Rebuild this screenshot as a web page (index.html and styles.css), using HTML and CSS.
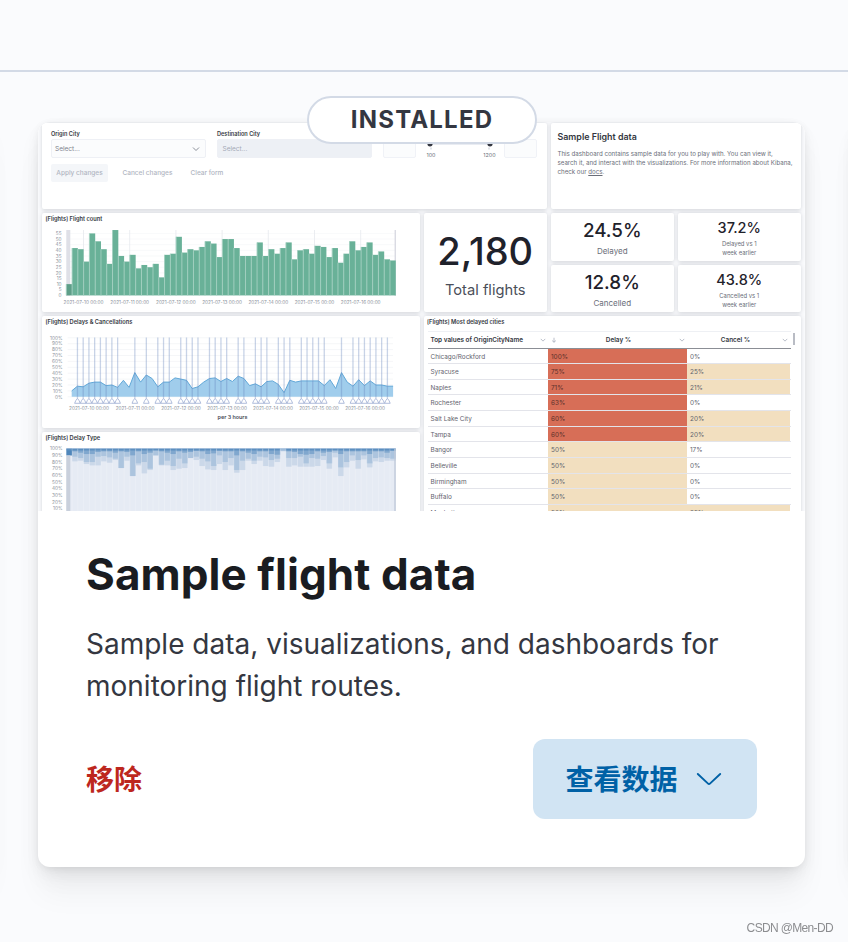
FILE: index.html
```html
<!DOCTYPE html>
<html lang="zh-CN">
<head>
    <meta charset="UTF-8">
    <meta name="viewport" content="width=device-width, initial-scale=1.0">
    <title>Sample data</title>
    <link rel="stylesheet" href="styles.css">
</head>
<body>

<div class="page-header"></div>

<div class="card-row">
    <div class="card"></div>

    <div class="card">
        <span class="badge">INSTALLED</span>

        <div class="preview">
            <div class="panel controls">
                <div class="fields">
                    <div class="field">
                        <div class="field-label">Origin City</div>
                        <div class="select">Select...
                            <svg class="chevron" viewBox="0 0 8 8"><path d="M1 2.5 4 5.5 7 2.5"/></svg>
                        </div>
                    </div>
                    <div class="field">
                        <div class="field-label">Destination City</div>
                        <div class="select disabled">Select...</div>
                    </div>
                    <div class="range">
                        <div class="range-input"></div>
                        <svg class="range-track" width="88" height="20" viewBox="0 0 88 20">
                            <path d="M14 5H74" stroke="#d3dae6" stroke-width="1"/>
                            <circle cx="14" cy="4.8" r="2.6"/>
                            <circle cx="74" cy="4.8" r="2.6"/>
                            <path d="M15 8.5V10.5M73 8.5V10.5" stroke="#aab2c0" stroke-width=".7"/>
                            <text x="15" y="18.3">100</text>
                            <text x="73.5" y="18.3">1200</text>
                        </svg>
                        <div class="range-input"></div>
                    </div>
                </div>
                <div class="actions">
                    <span class="apply">Apply changes</span>
                    <span class="cancel">Cancel changes</span>
                    <span>Clear form</span>
                </div>
            </div>

            <div class="panel about">
                <h3>Sample Flight data</h3>
                <p>This dashboard contains sample data for you to play with. You can view it,<br>
                search it, and interact with the visualizations. For more information about Kibana,<br>
                check our <u>docs</u>.</p>
            </div>

            <div class="panel flight-count">
                <div class="panel-title">[Flights] Flight count</div>
                <svg id="countChart" class="chart" width="378" height="88" viewBox="42 224 378 88"></svg>
            </div>

            <div class="panel metric total">
                <b>2,180</b>
                <span>Total flights</span>
            </div>
            <div class="panel metric">
                <b>24.5%</b>
                <span>Delayed</span>
            </div>
            <div class="panel metric small">
                <b>37.2%</b>
                <span>Delayed vs 1<br>week earlier</span>
            </div>
            <div class="panel metric">
                <b>12.8%</b>
                <span>Cancelled</span>
            </div>
            <div class="panel metric small">
                <b>43.8%</b>
                <span>Cancelled vs 1<br>week earlier</span>
            </div>

            <div class="panel delays">
                <div class="panel-title">[Flights] Delays &amp; Cancellations</div>
                <svg id="delayChart" class="chart" width="378" height="101" viewBox="42 327 378 101"></svg>
            </div>

            <div class="panel delay-type">
                <div class="panel-title">[Flights] Delay Type</div>
                <svg id="typeChart" class="chart" width="378" height="80" viewBox="42 443 378 80"></svg>
            </div>

            <div class="panel cities">
                <div class="panel-title">[Flights] Most delayed cities</div>
                <div class="table" id="cityTable">
                    <div class="tr th">
                        <div>Top values of OriginCityName
                            <svg class="chevron" viewBox="0 0 8 8"><path d="M1 2.5 4 5.5 7 2.5"/></svg>
                        </div>
                        <div class="centered">
                            <svg class="sort" viewBox="0 0 8 8"><path d="M4 1V7M1.5 4.8 4 7 6.5 4.8"/></svg>
                            Delay %
                            <svg class="chevron" viewBox="0 0 8 8"><path d="M1 2.5 4 5.5 7 2.5"/></svg>
                        </div>
                        <div class="centered last">Cancel %
                            <svg class="chevron" viewBox="0 0 8 8"><path d="M1 2.5 4 5.5 7 2.5"/></svg>
                        </div>
                    </div>
                </div>
                <span class="scrollbar"></span>
            </div>
        </div>

        <div class="card-body">
            <h2>Sample flight data</h2>
            <p>Sample data, visualizations, and dashboards for monitoring flight routes.</p>
            <div class="card-footer">
                <a class="remove">移除</a>
                <button type="button" class="view-data">查看数据
                    <svg width="26" height="16" viewBox="0 0 26 16"><path d="M1.8 4 11.8 13.4Q13 14.5 14.2 13.4L24.2 4"/></svg>
                </button>
            </div>
        </div>
    </div>

    <div class="card"></div>
</div>

<div class="watermark">CSDN @Men-DD</div>

<script src="charts.js"></script>
</body>
</html>
```
FILE: styles.css
```css
* {
    box-sizing: border-box;
}
body {
    font-family: Inter, "Noto Sans CJK SC", sans-serif;
    margin: 0;
    height: 942px;
    overflow: hidden;
    background-color: #fafbfd;
    color: #343741;
}
.page-header {
    height: 72px;
    border-bottom: 2px solid #d3dae6;
}

/* Cards */
.card-row {
    display: flex;
    justify-content: center;
    gap: 48px;
    width: 843px;
    margin-top: 50px;
}
.card {
    position: relative;
    flex: none;
    width: 767px;
    height: 745px;
    background-color: #fff;
    border-radius: 12px;
    box-shadow: 0 1.8px 8px -2px rgba(0, 0, 0, 0.08), 0 5.2px 16px -2px rgba(0, 0, 0, 0.06),
        0 11.4px 24px -2px rgba(0, 0, 0, 0.05), 0 30px 30px -2px rgba(0, 0, 0, 0.04);
}
.badge {
    position: absolute;
    z-index: 2;
    top: -26px;
    left: 269px;
    width: 230px;
    height: 48px;
    border: 2px solid #d3dae6;
    border-radius: 24px;
    background-color: #fff;
    font-size: 24px;
    font-weight: 700;
    line-height: 43px;
    letter-spacing: 1.2px;
    text-align: center;
}
.card-body {
    padding: 39px 48px 48px;
}
h2 {
    margin: 0 0 25px;
    font-size: 44px;
    font-weight: 700;
    line-height: 48px;
    letter-spacing: 0.08px;
    color: #1a1c21;
}
.card-body p {
    margin: 0 0 32px;
    font-size: 28px;
    line-height: 42px;
}
.card-footer {
    display: flex;
    justify-content: space-between;
    align-items: center;
}
.remove {
    padding-bottom: 2px;
    font-size: 28px;
    font-weight: 700;
    color: #bd271e;
}
.view-data {
    display: flex;
    align-items: center;
    justify-content: center;
    gap: 18px;
    width: 224px;
    height: 80px;
    padding: 0 9px 2px 6px;
    border: none;
    border-radius: 12px;
    background-color: #d1e4f3;
    font-family: inherit;
    font-size: 28px;
    font-weight: 700;
    color: #0061a6;
}
.view-data svg {
    fill: none;
    stroke: #0061a6;
    stroke-width: 1.9;
    stroke-linecap: round;
}

/* Dashboard preview */
.preview {
    display: grid;
    grid-template-columns: 378px 123.5px 123.5px 123.5px;
    grid-template-rows: 86px 47.5px 47.5px 112px 100px;
    column-gap: 3.5px;
    row-gap: 4px;
    height: 389px;
    padding: 1px 3px 0 4px;
    border-radius: 12px 12px 0 0;
    overflow: hidden;
    background-color: #fafbfd;
}
.panel {
    position: relative;
    border-radius: 2px;
    background-color: #fff;
    box-shadow: 0 0.5px 4px rgba(60, 65, 80, 0.2);
}
.panel-title {
    height: 11px;
    padding-left: 3.5px;
    font-size: 5.7px;
    font-weight: 600;
    line-height: 11px;
}
.chart {
    display: block;
}
.chart text {
    font-size: 4.7px;
    fill: #8a8f9a;
}
.chart .x-title {
    font-size: 5.4px;
    font-weight: 600;
    fill: #4b4f5a;
}
.chevron,
.sort {
    position: absolute;
    width: 6px;
    height: 6px;
    fill: none;
    stroke: #98a0b0;
    stroke-width: 0.9;
}

/* Input controls */
.controls {
    grid-column: span 2;
    padding: 7px 9px;
}
.fields {
    display: flex;
    gap: 11px;
}
.field {
    width: 155px;
}
.field-label {
    height: 9px;
    font-size: 5.6px;
    font-weight: 600;
    line-height: 8px;
}
.select {
    position: relative;
    height: 19px;
    padding-left: 3px;
    border: 1px solid #eef0f5;
    border-radius: 2px;
    background-color: #fbfcfd;
    font-size: 6.5px;
    line-height: 18px;
    color: #7d828d;
}
.select .chevron {
    top: 5px;
    right: 5px;
    width: 8px;
    height: 8px;
    stroke: #7d828d;
}
.select.disabled {
    padding-left: 4.5px;
    background-color: #edf0f5;
    color: #a3a9b5;
}
.range {
    display: flex;
    padding-top: 9px;
}
.range-input {
    width: 33px;
    height: 19px;
    border: 1px solid #f0f2f7;
    border-radius: 2px;
    background-color: #fbfcfd;
}
.range-track {
    fill: #343741;
}
.range-track text {
    font-size: 5.4px;
    text-anchor: middle;
    fill: #6a6f7a;
}
.actions {
    display: flex;
    margin-top: 5px;
    font-size: 6.5px;
    font-weight: 500;
    line-height: 18px;
    color: #b0b5c1;
}
.apply {
    width: 57px;
    margin-right: 14.5px;
    border-radius: 2px;
    background-color: #f4f6f9;
    text-align: center;
}
.cancel {
    width: 68px;
}

.about {
    grid-column: span 2;
    padding: 8px 7px;
}
.about h3 {
    margin: 0 0 6px;
    font-size: 8.9px;
    font-weight: 600;
    line-height: 12px;
}
.about p {
    margin: 0;
    font-size: 6.16px;
    line-height: 9.2px;
    white-space: nowrap;
    color: #6a6e79;
}

/* Metrics */
.flight-count {
    grid-row: 2 / 4;
}
.metric {
    display: flex;
    flex-direction: column;
    align-items: center;
    padding-top: 7px;
    text-align: center;
}
.metric b {
    font-size: 18.8px;
    font-weight: 500;
    line-height: 22px;
    color: #1f222b;
}
.metric span {
    margin-top: 3px;
    font-size: 8px;
    line-height: 12px;
    color: #6a6e79;
}
.metric.small {
    padding-top: 6px;
}
.metric.small b {
    font-size: 14.5px;
    line-height: 18px;
}
.metric.small span {
    margin-top: 2px;
    font-size: 5.9px;
    line-height: 9px;
}
.metric.total {
    grid-row: 2 / 4;
    grid-column: 2;
    padding-top: 15px;
}
.metric.total b {
    font-size: 38px;
    line-height: 46px;
}
.metric.total span {
    margin-top: 6px;
    font-size: 14.7px;
    line-height: 20px;
    color: #4b4f5a;
}
.delays {
    grid-row: 4;
    grid-column: 1;
}
.delay-type {
    grid-row: 5;
    grid-column: 1;
}

/* Most delayed cities */
.cities {
    grid-row: 4 / 6;
    grid-column: 2 / 5;
}
.table {
    width: 363px;
    margin: 4px 0 0 4px;
    font-size: 6.4px;
    color: #5f636e;
}
.tr {
    display: grid;
    grid-template-columns: 120.5px 139px 103px;
    grid-template-rows: 100%;
    height: 15.65px;
    border-bottom: 1px solid #e3e4ea;
    line-height: 16px;
}
.tr div {
    position: relative;
    padding-left: 3px;
}
.tr.th {
    height: 17.5px;
    border-top: 1px solid #eef0f4;
    border-bottom: 1px solid #8b8e95;
    font-weight: 600;
    color: #343741;
}
.tr .centered {
    padding: 0 0 0 2px;
    text-align: center;
}
.tr .last {
    padding: 0 6px 0 0;
}
.th .chevron {
    top: 5px;
    right: 2.5px;
}
.th .sort {
    top: 5px;
    left: 3px;
}
.tr .red {
    background-color: #d76e57;
    color: #5a302b;
}
.tr .tan {
    background-color: #f2dfbf;
}
.scrollbar {
    position: absolute;
    top: 17px;
    right: 6px;
    width: 2px;
    height: 12px;
    background-color: #b9bcc4;
}

.watermark {
    position: fixed;
    right: 15px;
    bottom: 7px;
    font-family: "Liberation Sans", sans-serif;
    font-size: 12px;
    line-height: 14px;
    letter-spacing: -0.65px;
    color: #8c8d90;
}
```
FILE: charts.js
```js
var days = ['2021-07-10', '2021-07-11', '2021-07-12', '2021-07-13', '2021-07-14', '2021-07-15', '2021-07-16'];

function rect(x, y, w, h, fill) {
    return '<rect x="' + x + '" y="' + y + '" width="' + w + '" height="' + h + '" fill="' + fill + '"/>';
}

function line(x1, y1, x2, y2, stroke, width) {
    return '<path d="M' + x1 + ' ' + y1 + 'L' + x2 + ' ' + y2 + '" stroke="' + stroke + '" stroke-width="' + width + '"/>';
}

function text(x, y, value, anchor, cls) {
    return '<text x="' + x + '" y="' + y + '" text-anchor="' + anchor + '" class="' + (cls || '') + '">' + value + '</text>';
}

// Flight count bars
function drawCount() {
    var counts = [10, 42, 41, 30, 55, 48, 41, 28, 58, 35, 30, 36, 24, 27, 25, 28, 16, 36, 37, 52, 38, 41, 40, 43, 48, 46, 34,
        50, 50, 42, 35, 35, 35, 47, 35, 41, 37, 42, 47, 32, 40, 41, 37, 44, 43, 34, 42, 29, 37, 48, 40, 43, 47, 36, 39, 32, 31];
    var step = 5.78, left = 66.3, base = 295.4, unit = 1.127;
    var out = '';
    for (var v = 0; v <= 55; v += 5) {
        out += line(left, base - v * unit, 395.8, base - v * unit, '#f1f2f5', 0.5);
        out += text(61.5, base - v * unit + 1.7, v, 'end');
    }
    days.forEach(function (d, i) {
        out += line(83.5 + i * 46.2, 230, 83.5 + i * 46.2, base, '#e6e8ed', 0.8);
        out += text(83.5 + i * 46.2, 304, d + ' 00:00', 'middle');
    });
    out += rect(left, 230, 4, 66, '#dfe0e7');
    out += rect(394.6, 230, 1.3, 66, '#d6d8e0');
    counts.forEach(function (c, i) {
        var x = left + i * step;
        out += rect(x, base - c * unit, step, c * unit, i === 0 ? '#5d9e88' : '#69b198');
        out += line(x, base - c * unit, x, base, '#a3cfc0', 0.9);
    });
    document.getElementById('countChart').innerHTML = out;
}

// Delay percentage area with cancellation markers
function drawDelays() {
    var pct = [10, 18, 17, 23, 25, 25, 19, 20, 16, 28, 16, 41, 25, 37, 31, 17, 25, 25, 32, 30, 28, 14, 17, 25, 31, 32, 26, 31,
        26, 35, 31, 19, 22, 17, 26, 27, 21, 7, 28, 25, 27, 27, 27, 27, 19, 29, 14, 41, 25, 18, 29, 19, 27, 20, 20, 18, 18];
    var marks = [1, 2, 3, 4, 5, 6, 7, 8, 11, 13, 15, 16, 17, 19, 20, 21, 22, 24, 25, 26, 27, 29, 30, 32, 33, 34, 36, 37, 38,
        40, 41, 42, 43, 44, 47, 49, 50, 51, 52, 53, 54, 55];
    var step = 5.74, left = 71.7, base = 396.8, unit = 0.59;
    var out = '';
    for (var v = 0; v <= 100; v += 10) {
        out += line(left - 4, base - v * unit, 393, base - v * unit, '#eff0f4', 0.6);
        out += text(62.5, base - v * unit + 1.7, v + '%', 'end');
    }
    days.forEach(function (d, i) {
        out += text(89 + i * 46, 410, d + ' 00:00', 'middle');
    });
    var points = pct.map(function (p, i) {
        return (left + i * step).toFixed(1) + ',' + (base - p * unit).toFixed(1);
    });
    out += '<polygon points="' + left + ',' + base + ' ' + points.join(' ') + ' 393.1,' + base + '" fill="#a0cdec"/>';
    out += '<polyline points="' + points.join(' ') + '" fill="none" stroke="#62a8d8" stroke-width="1"/>';
    marks.forEach(function (m) {
        var x = left + m * step;
        out += '<path d="M' + x + ' 337.5V398" stroke="#6684bd" stroke-opacity=".36" stroke-width="1.3"/>';
        out += '<path d="M' + x + ' 398.3l-1.7 2.4-1.1 2.6h5.6l-1.1-2.6z" fill="#fff" stroke="#8fa2cd" stroke-width=".7"/>';
    });
    out += text(232.5, 418.8, 'per 3 hours', 'middle', 'x-title');
    document.getElementById('delayChart').innerHTML = out;
}

// Stacked delay types, measured in percent down from the top
function drawTypes() {
    var outer = [10, 19, 18, 23, 25, 25, 19, 21, 17, 29, 18, 41, 25, 37, 32, 10, 25, 25, 32, 30, 29, 14, 17, 26, 31, 32, 23,
        32, 25, 36, 32, 18, 23, 18, 26, 27, 20, 4, 27, 25, 27, 27, 27, 26, 17, 30, 13, 41, 28, 18, 30, 16, 28, 19, 20, 18, 18];
    var middle = [10, 12, 14, 20, 20, 12, 11, 13, 15, 29, 12, 41, 22, 20, 30, 10, 24, 18, 26, 15, 22, 14, 12, 15, 19, 26, 10,
        20, 14, 32, 18, 15, 18, 12, 13, 17, 15, 3, 14, 14, 12, 22, 14, 15, 11, 22, 6, 28, 20, 10, 17, 10, 22, 14, 13, 14, 15];
    var inner = [10, 4, 6, 8, 8, 5, 4, 4, 6, 4, 5, 10, 4, 8, 6, 2, 4, 6, 8, 4, 6, 5, 3, 4, 8, 7, 3, 4, 4, 10, 4, 6, 8, 4, 4,
        8, 9, 1, 4, 5, 8, 9, 8, 4, 6, 5, 2, 8, 4, 4, 4, 4, 8, 4, 4, 6, 3];
    var step = 5.78, left = 66.3, top = 448.7, unit = 0.667;
    var out = rect(left, top, 329.5, 70, '#e6ebf4');
    for (var v = 100; v >= 10; v -= 10) {
        out += text(62.5, top + (100 - v) * unit + 1.7, v + '%', 'end');
    }
    outer.forEach(function (o, i) {
        var x = left + i * step;
        out += rect(x, top, step, o * unit, '#cbd8e9');
        out += rect(x, top, step, middle[i] * unit, '#acc4de');
        out += rect(x, top, step, inner[i] * unit, i === 0 ? '#4f86ba' : '#80a7ce');
        out += rect(x, top, step, 1.8, i === 37 ? '#9dbbd9' : '#5c8fc0');
        out += '<path d="M' + x + ' 448.7V520" stroke="#fff" stroke-opacity=".35" stroke-width=".6"/>';
    });
    out += rect(left, 455.5, 4, 65, '#c9d0dc');
    out += rect(394.3, top, 1.4, 70, '#c0cbda');
    document.getElementById('typeChart').innerHTML = out;
}

var cities = [
    ['Chicago/Rockford', 100, 0],
    ['Syracuse', 75, 25],
    ['Naples', 71, 21],
    ['Rochester', 63, 0],
    ['Salt Lake City', 60, 20],
    ['Tampa', 60, 20],
    ['Bangor', 50, 17],
    ['Belleville', 50, 0],
    ['Birmingham', 50, 0],
    ['Buffalo', 50, 0],
    ['Manhattan', 50, 25]
];

function shade(value) {
    if (value >= 60) return 'red';
    return value >= 20 ? 'tan' : '';
}

drawCount();
drawDelays();
drawTypes();
document.getElementById('cityTable').innerHTML += cities.map(function (c) {
    return '<div class="tr"><div>' + c[0] + '</div><div class="' + shade(c[1]) + '">' + c[1] + '%</div>' +
        '<div class="' + shade(c[2]) + '">' + c[2] + '%</div></div>';
}).join('');
```
